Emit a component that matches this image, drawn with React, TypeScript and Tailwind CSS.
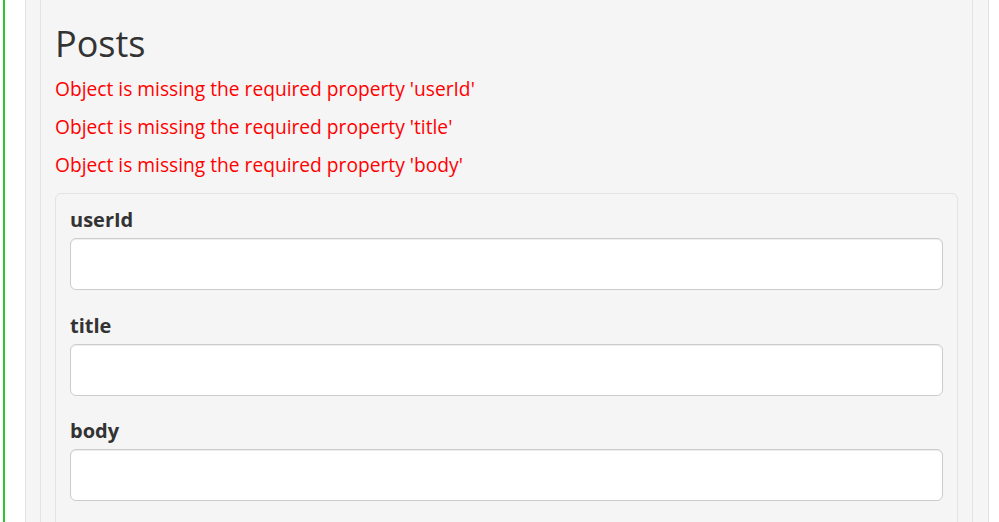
export default function App() {
  const fields = ['userId', 'title', 'body'];
  const errors = ['userId', 'title', 'body'];

  return (
    <div className="flex w-[999px] h-[522px] overflow-hidden bg-white font-['Open_Sans',sans-serif]">
      {/* left green rule */}
      <div className="w-[3px] shrink-0" />
      <div className="w-[2px] shrink-0 bg-[#2ec52e]" />
      <div className="w-[20px] shrink-0" />

      {/* outer well */}
      <div className="flex w-[964px] shrink-0 border-x border-[#e3e3e3] bg-[#f5f5f5] pl-[14px] pr-[15px]">
        {/* inner well */}
        <div className="flex-1 border-x border-[#e3e3e3] bg-[#f5f5f5] px-[14px]">
          <h1 className="mt-[24px] text-[36px] leading-[40px] text-[#333333]">Posts</h1>

          <div className="mt-[6px]">
            {errors.map((name) => (
              <div key={name} className="text-[19.2px] leading-[38px] text-[#ff0000]">
                Object is missing the required property '{name}'
              </div>
            ))}
          </div>

          {/* form card */}
          <div className="mt-[9px] rounded-[6px] border border-[#e3e3e3] bg-[#f5f5f5] px-[14px] pt-[12px] pb-[20px]">
            {fields.map((name) => (
              <div key={name} className="mb-[21.5px]">
                <label className="mb-[4px] block text-[20px] font-bold leading-[28px] text-[#333333]">
                  {name}
                </label>
                <input
                  type="text"
                  className="block h-[52px] w-full rounded-[6px] border border-[#cccccc] bg-white shadow-[inset_0_1px_1px_rgba(0,0,0,0.075)]"
                />
              </div>
            ))}
          </div>
        </div>
      </div>
    </div>
  );
}
